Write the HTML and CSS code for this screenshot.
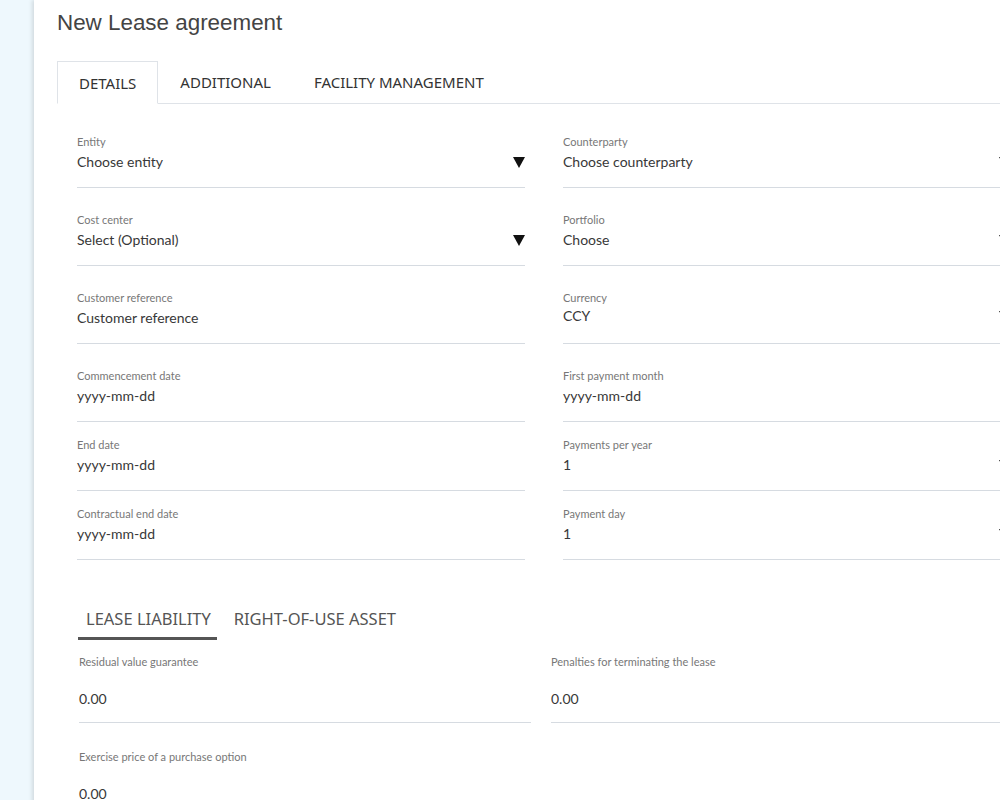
FILE: index.html
```html
<!DOCTYPE html>
<html>
<head>
<meta charset="utf-8">
<link rel="stylesheet" href="styles.css">
</head>
<body>
<div class="panel">
  <h1 class="title">New Lease agreement</h1>
  <div class="tabs">
    <div class="tab active">DETAILS</div>
    <div class="tab">ADDITIONAL</div>
    <div class="tab">FACILITY MANAGEMENT</div>
  </div>
  <div class="form">
    <div class="field"><div class="label">Entity</div><div class="value">Choose entity<svg class="arrow" viewBox="0 0 12 11"><polygon points="0,0 12,0 6,11"/></svg></div></div>
    <div class="field"><div class="label">Counterparty</div><div class="value">Choose counterparty<svg class="arrow" viewBox="0 0 12 11"><polygon points="0,0 12,0 6,11"/></svg></div></div>
    <div class="field"><div class="label">Cost center</div><div class="value">Select (Optional)<svg class="arrow" viewBox="0 0 12 11"><polygon points="0,0 12,0 6,11"/></svg></div></div>
    <div class="field"><div class="label">Portfolio</div><div class="value">Choose<svg class="arrow" viewBox="0 0 12 11"><polygon points="0,0 12,0 6,11"/></svg></div></div>
    <div class="field"><div class="label">Customer reference</div><div class="value">Customer reference</div></div>
    <div class="field"><div class="label">Currency</div><div class="value raised">CCY<svg class="arrow" viewBox="0 0 12 11"><polygon points="0,0 12,0 6,11"/></svg></div></div>
    <div class="field short"><div class="label">Commencement date</div><div class="value">yyyy-mm-dd</div></div>
    <div class="field short"><div class="label">First payment month</div><div class="value">yyyy-mm-dd</div></div>
    <div class="field short"><div class="label">End date</div><div class="value">yyyy-mm-dd</div></div>
    <div class="field short"><div class="label">Payments per year</div><div class="value">1<svg class="arrow" viewBox="0 0 12 11"><polygon points="0,0 12,0 6,11"/></svg></div></div>
    <div class="field last"><div class="label">Contractual end date</div><div class="value">yyyy-mm-dd</div></div>
    <div class="field last"><div class="label">Payment day</div><div class="value">1<svg class="arrow" viewBox="0 0 12 11"><polygon points="0,0 12,0 6,11"/></svg></div></div>
  </div>
  <div class="subtabs">
    <div class="subtab active">LEASE LIABILITY</div>
    <div class="subtab">RIGHT-OF-USE ASSET</div>
  </div>
  <div class="form2">
    <div class="field2"><div class="label">Residual value guarantee</div><div class="value2">0.00</div></div>
    <div class="field2"><div class="label">Penalties for terminating the lease</div><div class="value2">0.00</div></div>
    <div class="field2"><div class="label">Exercise price of a purchase option</div><div class="value2">0.00</div></div>
  </div>
</div>
</body>
</html>
```
FILE: styles.css
```css
html, body {
  margin: 0;
  padding: 0;
  height: 800px;
  overflow: hidden;
  background: #eef8fd;
}
.panel {
  margin-left: 34px;
  width: 1000px;
  min-height: 800px;
  background: #fff;
  box-shadow: -2px 0 4px rgba(0, 0, 0, 0.12);
  padding-left: 23px;
  box-sizing: border-box;
}
.title {
  margin: 0;
  padding-top: 9px;
  font-family: "Liberation Sans", Arial, sans-serif;
  font-weight: normal;
  font-size: 22.4px;
  line-height: 28px;
  color: #444;
}
.tabs {
  display: flex;
  margin-top: 24px;
  height: 42px;
  border-bottom: 1px solid #dfe3e8;
  width: 943px;
}
.tab {
  padding: 1px 21px 0 22px;
  font-family: "Noto Sans", sans-serif;
  font-size: 15px;
  line-height: 41px;
  color: #333;
}
.tab.active {
  border: 1px solid #dfe3e8;
  border-bottom: 1px solid #fff;
  margin-bottom: -1px;
  padding: 1px 21px 0 21px;
  line-height: 40px;
}
.form {
  display: grid;
  grid-template-columns: 448px 448px;
  column-gap: 38px;
  margin-left: 20px;
  margin-top: 31px;
}
.field {
  border-bottom: 1px solid #d6dbe1;
  padding-bottom: 14px;
  margin-bottom: 25px;
}
.field.short {
  margin-bottom: 16px;
}
.field.last {
  margin-bottom: 0;
}
.label {
  font-family: Lato, sans-serif;
  font-size: 11px;
  line-height: 14px;
  color: #777;
}
.value {
  display: flex;
  justify-content: space-between;
  align-items: center;
  margin-top: 3px;
  margin-bottom: 1px;
  font-family: Lato, sans-serif;
  font-size: 14px;
  line-height: 20px;
  color: #383838;
}
.value.raised {
  margin-top: 1px;
  margin-bottom: 3px;
}
.arrow {
  width: 12px;
  height: 11px;
  fill: #111;
  margin-right: 0;
}
.subtabs {
  display: flex;
  gap: 9px;
  margin-left: 21px;
  margin-top: 47px;
}
.subtab {
  padding: 0 6px 6px 8px;
  font-family: "Noto Sans", sans-serif;
  font-size: 16.5px;
  line-height: 24px;
  color: #555;
  border-bottom: 3px solid transparent;
}
.subtab.active {
  border-bottom-color: #555;
}
.form2 {
  display: grid;
  grid-template-columns: 452px 452px;
  column-gap: 20px;
  margin-left: 22px;
  margin-top: 15px;
}
.field2 {
  border-bottom: 1px solid #d6dbe1;
  padding-bottom: 13px;
  margin-bottom: 27px;
}
.value2 {
  margin-top: 20px;
  font-family: Lato, sans-serif;
  font-size: 14px;
  line-height: 20px;
  color: #383838;
}
```
